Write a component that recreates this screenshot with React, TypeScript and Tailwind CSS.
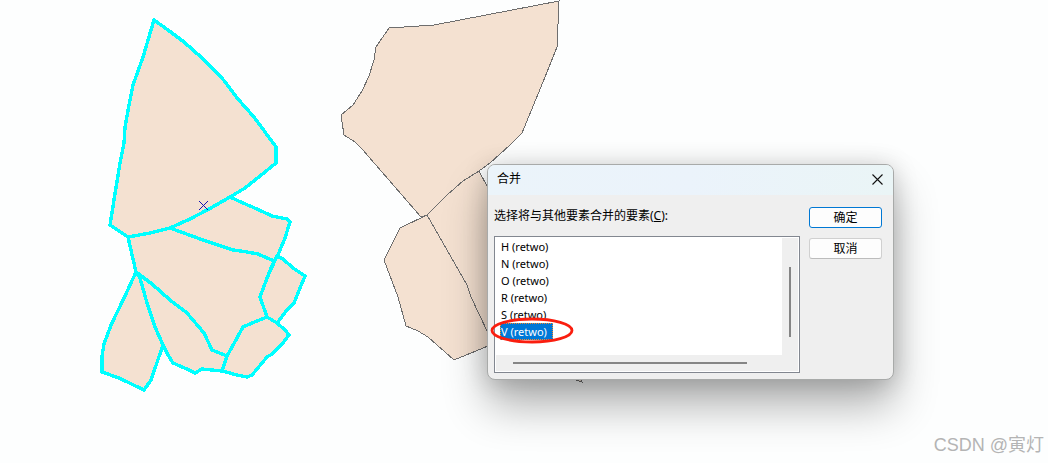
import { useState } from 'react'

const LAYERS = ['H', 'N', 'O', 'R', 'S', 'V']

const SELECTED = [
  'M154 20L168 30L184 42L202 58L222 78L238 99L254 117L276 147V163L260 176L245 188L230 197L209 209L190 219L170 228L150 233L128 237L110 225L114 200L120 163L124 143L125 127L129 105L133 85L143 57Z',
  'M128 237L150 233L170 228L203 240L233 250L247 252L258 254L274 261L267 278L260 297L267 317L257 321L243 327L237 338L227 356L212 350L204 333L187 313L170 300L152 284L136 272Z',
  'M170 228L190 219L209 209L230 197L243 203L257 209L272 216L287 219L290 222L285 238L278 255L274 261L258 254L247 252L233 250L203 240Z',
  'M277 256L283 259L293 268L305 276L298 293L294 303L287 310L277 323L267 317L260 297L267 278Z',
  'M267 317L277 323L285 330L289 335L283 343L272 354L267 357L252 375L247 377L237 375L222 371L227 356L237 338L243 327L257 321Z',
  'M136 272L152 284L170 300L187 313L204 333L212 350L227 356L222 371L212 370L202 369L195 373L187 369L173 363L168 355L163 345L155 327L147 303L140 278Z',
  'M136 272L140 278L147 303L155 327L163 345L151 380L144 390L119 378L102 372V356L104 344L111 325L125 296Z',
]

const UNSELECTED = [
  'M559 1L434 25L389 28L376 47L374 60L369 76L362 91L353 105L341 115L344 135L355 142L362 149L421 217L427 215L447 195L463 181L479 171L490 163L510 145L522 133L543 82L557 47Z',
  'M427 215L447 195L463 181L479 171L488 188L582 382L573 379L488 333L471 297L467 285Z',
  'M427 215L400 228L384 260L398 297L406 326L418 331L428 337L454 360L488 346L500 340L488 333L471 297L467 285Z',
]

function MapCanvas() {
  return (
    <svg
      className="absolute top-0 left-0"
      width="1048"
      height="463"
      viewBox="0 0 1048 463"
      fill="#f4e1d1"
      shapeRendering="crispEdges"
      aria-hidden="true"
    >
      <g stroke="#6e6e6e" strokeWidth="1">
        {UNSELECTED.map((d) => (
          <path key={d} d={d} />
        ))}
      </g>
      <g stroke="#00ffff" strokeWidth="3.4" strokeLinejoin="round">
        {SELECTED.map((d) => (
          <path key={d} d={d} />
        ))}
      </g>
      <path
        d="M199 201L208 210M208 201L199 210"
        stroke="#1414b4"
        shapeRendering="auto"
      />
    </svg>
  )
}

function LayerList() {
  const [layer, setLayer] = useState('V')

  return (
    <div className="relative grid grid-cols-[1fr_16px] grid-rows-[117px_16px] border border-[#828790] bg-white p-px">
      <select
        id="layers"
        size={6}
        value={layer}
        onChange={(e) => setLayer(e.target.value)}
        className="h-full w-full appearance-none overflow-hidden pl-1 font-['Noto_Sans','Noto_Sans_CJK_SC',sans-serif] text-[11px] leading-[17px] text-black outline-none"
      >
        {LAYERS.map((name) => (
          <option
            key={name}
            value={name}
            className="block h-[17px] min-h-0 w-fit pt-px pr-1.5 pb-0 pl-px text-[11px] leading-[17px] checked:bg-[linear-gradient(#0078d7,#0078d7)] checked:text-white! checked:outline-1 checked:-outline-offset-1 checked:outline-dotted checked:outline-[#ff8728]"
          >
            {`${name} (retwo)`}
          </option>
        ))}
      </select>
      <div className="flex justify-center bg-[#efefef] pt-[29px]">
        <div className="h-[70px] w-[2px] bg-[#858585]" />
      </div>
      <div className="col-span-2 flex items-center bg-[#efefef] pl-[17px]">
        <div className="h-[2px] w-[234px] bg-[#858585]" />
      </div>
      <svg
        className="pointer-events-none absolute top-[80px] left-[-5px]"
        width="86"
        height="28"
        viewBox="0 0 86 28"
        fill="none"
        aria-hidden="true"
      >
        <ellipse
          cx="42"
          cy="13.5"
          rx="40"
          ry="11.5"
          stroke="#fa1e0f"
          strokeWidth="2.8"
        />
      </svg>
    </div>
  )
}

function MergeDialog() {
  return (
    <section
      role="dialog"
      aria-labelledby="merge-title"
      className="absolute top-[164px] left-[487px] w-[407px] overflow-hidden rounded-lg border border-[#a8aaa9] bg-[#efefef] shadow-[0_26px_44px_rgba(0,0,0,0.3),0_2px_24px_rgba(0,0,0,0.18)]"
    >
      <header className="flex h-[30px] items-center justify-between bg-linear-to-r from-[#ebf4fa] via-[#ebf3fb] to-[#eaf5f6] pr-2.5 pb-0.5 pl-[9px]">
        <h1 id="merge-title" className="text-xs">
          合并
        </h1>
        <button type="button" aria-label="关闭">
          <svg width="11" height="11" viewBox="0 0 11 11" stroke="#111">
            <path d="M0.5 0.5L10.5 10.5M10.5 0.5L0.5 10.5" strokeWidth="1.1" />
          </svg>
        </button>
      </header>
      <div className="flex gap-[9px] pt-3 pr-[11px] pb-1.5 pl-1.5">
        <div className="min-w-0 flex-1">
          <label htmlFor="layers" className="mb-3 block text-xs leading-[17px]">
            选择将与其他要素合并的要素(<u>C</u>):
          </label>
          <LayerList />
        </div>
        <div className="flex w-[73px] flex-col gap-2.5">
          <button
            type="button"
            className="h-[21px] rounded-[3px] border border-[#0078d4] bg-[#fdfdfd] pt-px text-xs leading-none"
          >
            确定
          </button>
          <button
            type="button"
            className="h-[21px] rounded-[3px] border border-[#d0d0d0] border-b-[#bcbcbc] bg-[#fdfdfd] pt-px text-xs leading-none"
          >
            取消
          </button>
        </div>
      </div>
    </section>
  )
}

function App() {
  return (
    <main className="relative min-h-screen overflow-hidden bg-[#fdfefe] font-['Noto_Sans','Noto_Sans_CJK_SC',sans-serif] text-black">
      <MapCanvas />
      <MergeDialog />
      <p className="absolute right-1 bottom-1 font-['Liberation_Sans','Noto_Sans_CJK_SC',sans-serif] text-lg text-[#b4b4b4]">
        CSDN @寅灯
      </p>
    </main>
  )
}

export default App
